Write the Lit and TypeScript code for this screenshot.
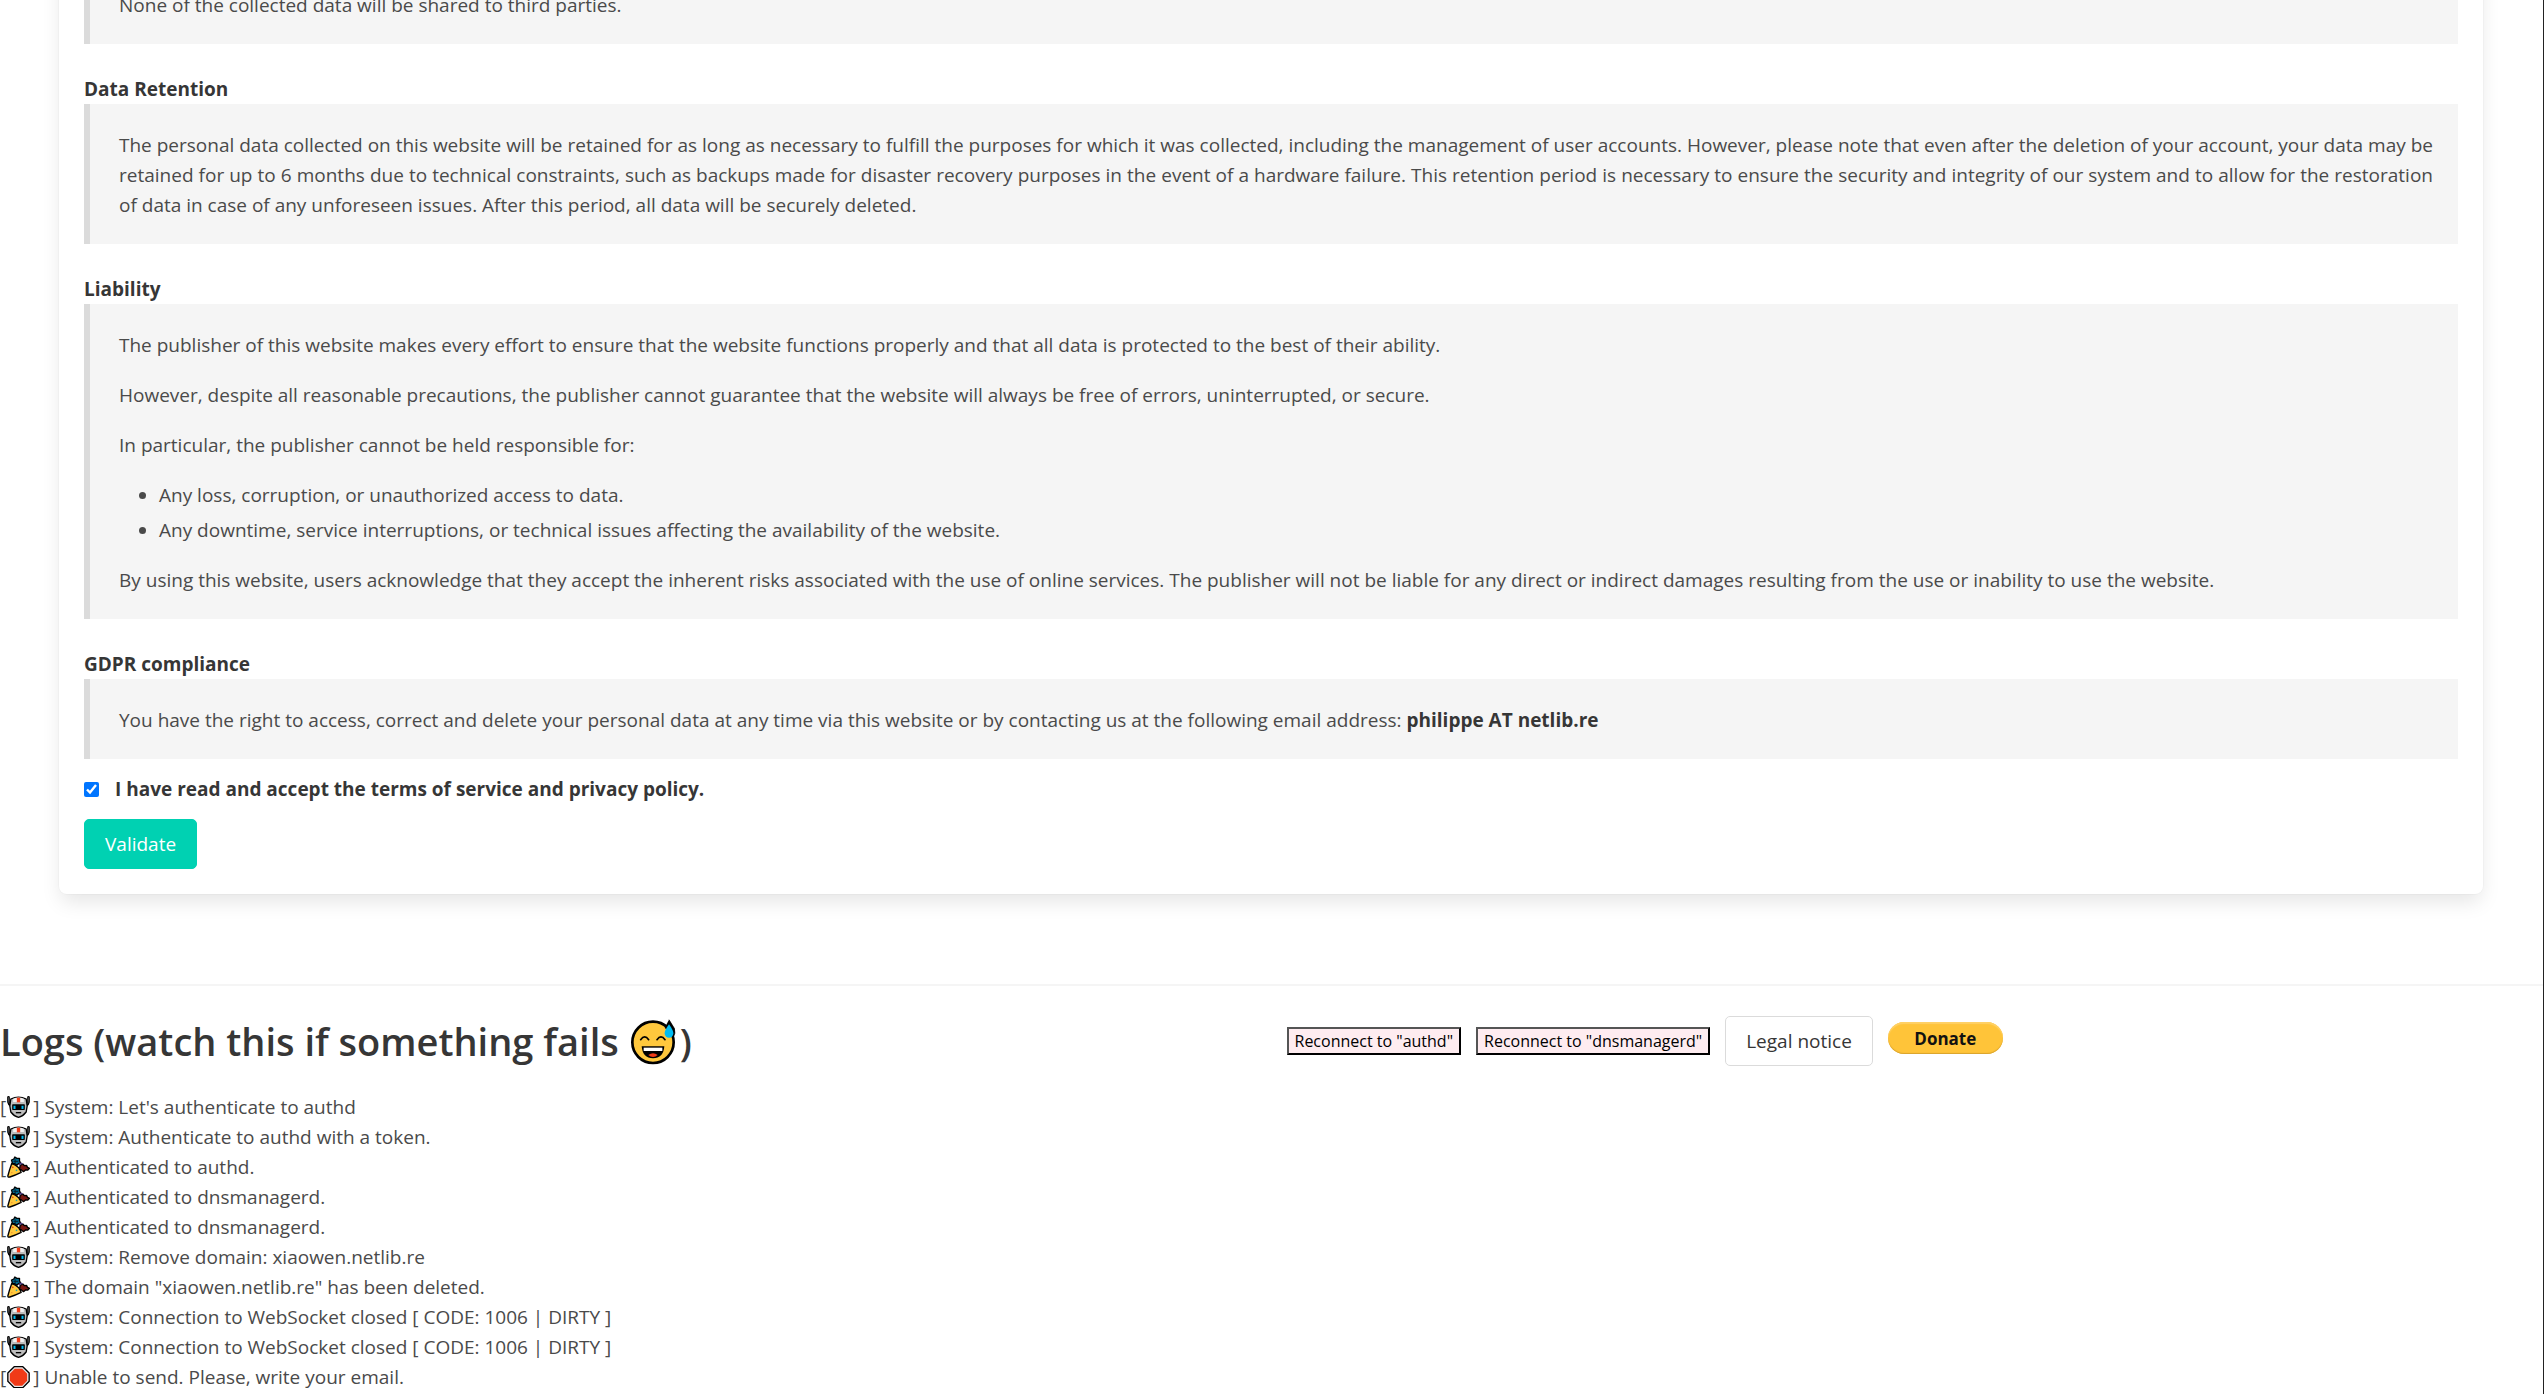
import { LitElement, html, css, svg } from "lit";
import { customElement, property, state } from "lit/decorators.js";

type LogKind = "system" | "success" | "error";

interface LogEntry {
  kind: LogKind;
  text: string;
}

const robot = svg`
  <path d="M4 4V18Q5 24 11 28M64 4V18Q63 24 57 28" fill="none" stroke="#000" stroke-width="8" stroke-linecap="round"/>
  <path d="M4 5V17Q5 22 10 25M64 5V17Q63 22 58 25" fill="none" stroke="#666" stroke-width="2" stroke-linecap="round"/>
  <path d="M11 9Q34 -2 57 9L60 30L57 48Q47 61 34 64Q21 61 11 48L8 30Z" fill="#bdbdbd" stroke="#000" stroke-width="4"/>
  <path d="M18 8Q34 1 50 8V18H18Z" fill="#f2f2f2"/>
  <path d="M29 5h10v14H29z" fill="#f03a17"/>
  <rect x="15" y="25" width="38" height="17" rx="2" fill="#000"/>
  <path d="M19 29h6v10h-6zM43 29h6v10h-6z" fill="#00bcf2"/>
  <path d="M26 50h16" stroke="#000" stroke-width="4"/>`;

const popper = svg`
  <path d="M14 22Q6 44 2 60Q2 65 8 63Q24 58 42 49Q38 32 14 22Z" fill="#ffc83d" stroke="#000" stroke-width="4" stroke-linejoin="round"/>
  <path d="M13 12l7 -3l3 -6l6 4l8 0l0 8l4 6l-7 2l-5 5l-6 -5l-7 -1z" fill="#006a8e" stroke="#000" stroke-width="4" stroke-linejoin="round"/>
  <path d="M24 10v12M19 16h14" stroke="#0a2030" stroke-width="3"/>
  <path d="M39 28l8 -4l5 5l6 -1l3 6l6 3l-5 5l-7 0l-6 5l-6 -5l-6 -2z" fill="#7a1a14" stroke="#000" stroke-width="4" stroke-linejoin="round"/>
  <path d="M35 26l6 -4l5 2" fill="none" stroke="#4c3a87" stroke-width="4"/>
  <circle cx="17" cy="34" r="2.5" fill="#f03a17"/>
  <circle cx="28" cy="43" r="2.5" fill="#00a8c8"/>
  <circle cx="14" cy="50" r="2" fill="#e8862a"/>`;

const stopSign = svg`
  <path d="M21 2H47L66 21V46L47 65H21L2 46V21Z" fill="#e6e6e6" stroke="#000" stroke-width="4" stroke-linejoin="round"/>
  <path d="M23 8H45L60 23V44L45 59H23L8 44V23Z" fill="#f03a17"/>`;

const icons = { system: robot, success: popper, error: stopSign };
const iconNames = { system: "robot", success: "party popper", error: "stop sign" };

@customElement("log-line")
export class LogLine extends LitElement {
  @property() kind: LogKind = "system";
  @property() text = "";

  static styles = css`
    :host {
      display: block;
      line-height: 30px;
      white-space: nowrap;
    }
    .icon {
      width: 23px;
      height: 22px;
      margin: 0 3px 0 1px;
      vertical-align: -4px;
    }
  `;

  render() {
    return html`[<svg class="icon" viewBox="0 0 68 66" role="img" aria-label=${iconNames[this.kind]}>${icons[this.kind]}</svg>] ${this.text}`;
  }
}

@customElement("app-root")
export class AppRoot extends LitElement {
  @state() private accepted = true;

  private logs: LogEntry[] = [
    { kind: "system", text: "System: Let's authenticate to authd" },
    { kind: "system", text: "System: Authenticate to authd with a token." },
    { kind: "success", text: "Authenticated to authd." },
    { kind: "success", text: "Authenticated to dnsmanagerd." },
    { kind: "success", text: "Authenticated to dnsmanagerd." },
    { kind: "system", text: "System: Remove domain: xiaowen.netlib.re" },
    { kind: "success", text: 'The domain "xiaowen.netlib.re" has been deleted.' },
    { kind: "system", text: "System: Connection to WebSocket closed [ CODE: 1006 | DIRTY ]" },
    { kind: "system", text: "System: Connection to WebSocket closed [ CODE: 1006 | DIRTY ]" },
    { kind: "error", text: "Unable to send. Please, write your email." },
  ];

  static styles = css`
    :host {
      display: block;
      min-height: 100vh;
      box-sizing: border-box;
      overflow: hidden;
      border-right: 1px solid #222;
      background: #fff;
      color: #4a4a4a;
      font-family: "Open Sans", "Noto Sans", sans-serif;
      font-size: 19px;
      line-height: 30px;
    }
    /* The page is scrolled: the card starts above the viewport. */
    .card {
      margin: -61px 60px 90px 59px;
      padding: 25px;
      border-radius: 8px;
      box-shadow: 0 10px 20px -2px rgba(10, 10, 10, 0.1), 0 0 0 1px rgba(10, 10, 10, 0.02);
    }
    .term {
      margin-bottom: 30px;
    }
    .term:last-of-type {
      margin-bottom: 15px;
    }
    h2 {
      margin: 0;
      color: #363636;
      font-size: inherit;
      font-weight: 700;
    }
    .quote {
      margin: 0;
      padding: 26px 25px 24px 29px;
      border-left: 6px solid #dbdbdb;
      background: #f5f5f5;
      text-align: justify;
    }
    .quote p {
      margin: 0 0 20px;
    }
    .quote p:last-child {
      margin-bottom: 0;
    }
    .quote ul {
      margin: 0 0 20px;
      padding: 0 0 0 40px;
    }
    .quote li + li {
      margin-top: 5px;
    }
    strong {
      color: #363636;
      font-weight: 700;
    }
    .accept {
      display: flex;
      align-items: center;
      gap: 16px;
      color: #363636;
      font-weight: 700;
    }
    .accept input {
      width: 15px;
      height: 15px;
      margin: 0;
    }
    button {
      box-sizing: border-box;
      font-family: inherit;
      cursor: pointer;
      white-space: nowrap;
    }
    .button {
      height: 50px;
      padding: 0 20px;
      border: 1px solid #dbdbdb;
      border-radius: 5px;
      background: #fff;
      color: #363636;
      font-size: 19px;
    }
    .primary {
      display: block;
      margin-top: 15px;
      border-color: #00d1b2;
      background: #00d1b2;
      color: #fff;
    }
    hr {
      height: 2px;
      margin: 0 0 30px;
      border: 0;
      background: #f5f5f5;
    }
    .bar {
      display: grid;
      grid-template-columns: 1fr 1fr;
      align-items: start;
      margin-bottom: 26px;
    }
    h1 {
      margin: 0;
      color: #363636;
      font-size: 38px;
      font-weight: 600;
      line-height: 50px;
      white-space: nowrap;
    }
    .grin {
      width: 46px;
      height: 46px;
      margin: 0 4px 0 1px;
      vertical-align: -9px;
    }
    .actions {
      display: flex;
      align-items: center;
      gap: 15px;
      padding-left: 15px;
    }
    .reconnect {
      height: 28px;
      padding: 0 6px;
      border: 2px solid;
      border-color: #555 #000 #000 #555;
      background: #feecf0;
      color: #000;
      font-size: 16px;
      line-height: 24px;
    }
    .donate-form {
      display: flex;
      margin: 0 0 6px;
    }
    .donate {
      width: 115px;
      height: 32px;
      padding: 0;
      border: 0;
      border-radius: 16px;
      background: #ffc439;
      box-shadow: inset 0 2px 1px #ffd166, inset 0 -1px 1px #d9a32d;
      color: #111;
      font-size: 17px;
      font-weight: 700;
    }
  `;

  private onAccept(event: Event) {
    this.accepted = (event.target as HTMLInputElement).checked;
  }

  render() {
    return html`
      <main class="card">
        <section class="term">
          <div class="quote"><p>None of the collected data will be shared to third parties.</p></div>
        </section>
        <section class="term">
          <h2>Data Retention</h2>
          <div class="quote">
            <p>The personal data collected on this website will be retained for as long as necessary to fulfill the purposes for which it was collected, including the management of user accounts. However, please note that even after the deletion of your account, your data may be retained for up to 6 months due to technical constraints, such as backups made for disaster recovery purposes in the event of a hardware failure. This retention period is necessary to ensure the security and integrity of our system and to allow for the restoration of data in case of any unforeseen issues. After this period, all data will be securely deleted.</p>
          </div>
        </section>
        <section class="term">
          <h2>Liability</h2>
          <div class="quote">
            <p>The publisher of this website makes every effort to ensure that the website functions properly and that all data is protected to the best of their ability.</p>
            <p>However, despite all reasonable precautions, the publisher cannot guarantee that the website will always be free of errors, uninterrupted, or secure.</p>
            <p>In particular, the publisher cannot be held responsible for:</p>
            <ul>
              <li>Any loss, corruption, or unauthorized access to data.</li>
              <li>Any downtime, service interruptions, or technical issues affecting the availability of the website.</li>
            </ul>
            <p>By using this website, users acknowledge that they accept the inherent risks associated with the use of online services. The publisher will not be liable for any direct or indirect damages resulting from the use or inability to use the website.</p>
          </div>
        </section>
        <section class="term">
          <h2>GDPR compliance</h2>
          <div class="quote">
            <p>You have the right to access, correct and delete your personal data at any time via this website or by contacting us at the following email address: <strong>philippe AT netlib.re</strong></p>
          </div>
        </section>
        <label class="accept" for="accept">
          <input id="accept" type="checkbox" .checked=${this.accepted} @change=${this.onAccept} />
          I have read and accept the terms of service and privacy policy.
        </label>
        <button class="button primary" type="button">Validate</button>
      </main>
      <hr />
      <footer>
        <div class="bar">
          <h1>Logs (watch this if something fails <svg class="grin" viewBox="0 0 138 138" role="img" aria-label="grinning face with sweat">
              <circle cx="69" cy="70" r="62" fill="#ffc83d" stroke="#000" stroke-width="8"/>
              <path d="M32 62q12 -17 24 0M81 62q12 -17 24 0" fill="none" stroke="#000" stroke-width="5" stroke-linecap="round"/>
              <path d="M35 82H103Q100 118 69 118Q38 118 35 82Z" fill="#000"/>
              <path d="M41 86H97V96H41Z" fill="#fff"/>
              <path d="M55 108Q69 98 83 108Q77 114 69 114Q61 114 55 108Z" fill="#f03a17"/>
              <path d="M117 2L133 28Q138 44 130 54" fill="#000" stroke="#000" stroke-width="2"/>
              <path d="M117 2L104 26L117 40L134 32Z" fill="#000"/>
              <path d="M117 16Q104 34 104 43A13 13 0 0 0 130 43Q130 34 117 16Z" fill="#00bcf2"/>
            </svg>)</h1>
          <div class="actions">
            <button class="reconnect" type="button">Reconnect to "authd"</button>
            <button class="reconnect" type="button">Reconnect to "dnsmanagerd"</button>
            <button class="button" type="button">Legal notice</button>
            <form class="donate-form" @submit=${(e: Event) => e.preventDefault()}>
              <button class="donate" type="submit">Donate</button>
            </form>
          </div>
        </div>
        ${this.logs.map((log) => html`<log-line .kind=${log.kind} .text=${log.text}></log-line>`)}
      </footer>
    `;
  }
}
